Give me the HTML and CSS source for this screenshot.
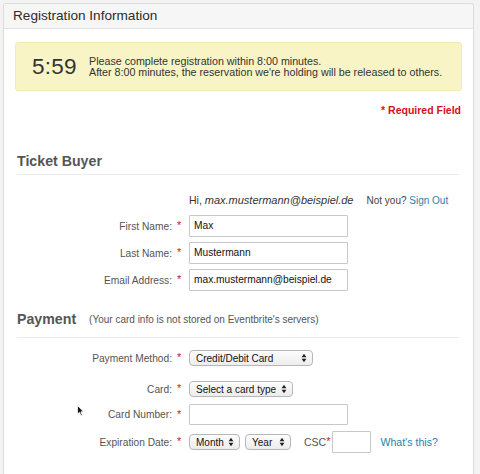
FILE: index.html
```html
<!DOCTYPE html>
<html>
<head>
<meta charset="utf-8">
<link rel="stylesheet" href="styles.css">
</head>
<body>
<div class="panel">
  <div class="panel-head">Registration Information</div>
  <div class="panel-body">
    <div class="timer">
      <div class="clock">5:59</div>
      <div class="timer-text">Please complete registration within 8:00 minutes.<br>After 8:00 minutes, the reservation we're holding will be released to others.</div>
    </div>
    <div class="required">* Required Field</div>

    <h2 class="section buyer">Ticket Buyer</h2>
    <div class="hi-row"><span class="hi">Hi, <em>max.mustermann@beispiel.de</em></span><span class="notyou">Not you? <a class="link">Sign Out</a></span></div>
    <div class="row r-first"><label class="lbl">First Name:</label><span class="star">*</span><span class="input">Max</span></div>
    <div class="row r-in"><label class="lbl">Last Name:</label><span class="star">*</span><span class="input">Mustermann</span></div>
    <div class="row r-in"><label class="lbl">Email Address:</label><span class="star">*</span><span class="input">max.mustermann@beispiel.de</span></div>

    <h2 class="section pay">Payment <small>(Your card info is not stored on Eventbrite's servers)</small></h2>
    <div class="row r-method"><label class="lbl">Payment Method:</label><span class="star">*</span><span class="select w-method">Credit/Debit Card<svg class="arr" viewBox="0 0 6 10" width="6" height="10"><path d="M3 0.8 L5.4 4.2 H0.6 Z M3 9.2 L5.4 5.8 H0.6 Z" fill="#222"/></svg></span></div>
    <div class="row r-card"><label class="lbl">Card:</label><span class="star">*</span><span class="select w-card">Select a card type<svg class="arr" viewBox="0 0 6 10" width="6" height="10"><path d="M3 0.8 L5.4 4.2 H0.6 Z M3 9.2 L5.4 5.8 H0.6 Z" fill="#222"/></svg></span></div>
    <div class="row r-num"><label class="lbl">Card Number:</label><span class="star">*</span><span class="input num"></span></div>
    <div class="row r-exp"><label class="lbl">Expiration Date:</label><span class="star">*</span>
      <span class="select w-month">Month<svg class="arr" viewBox="0 0 6 10" width="6" height="10"><path d="M3 0.8 L5.4 4.2 H0.6 Z M3 9.2 L5.4 5.8 H0.6 Z" fill="#222"/></svg></span>
      <span class="select w-year">Year<svg class="arr" viewBox="0 0 6 10" width="6" height="10"><path d="M3 0.8 L5.4 4.2 H0.6 Z M3 9.2 L5.4 5.8 H0.6 Z" fill="#222"/></svg></span>
      <span class="csc">CSC<span class="star s2">*</span></span>
      <span class="input cscbox"></span>
      <a class="link what">What's this?</a>
    </div>
    <svg class="cursor" width="8" height="12" viewBox="0 0 8 12"><path d="M0.5 0.5 L0.5 9 L2.5 7.2 L4 10.8 L5.3 10.2 L3.9 6.8 L6.5 6.8 Z" fill="#111" stroke="#fff" stroke-width="0.8"/></svg>
  </div>
</div>
</body>
</html>
```
FILE: styles.css
```css
html, body { margin: 0; padding: 0; }
body {
  background: #f3f3f3;
  font-family: "Liberation Sans", Arial, Helvetica, sans-serif;
  color: #333;
  width: 480px;
  height: 474px;
  overflow: hidden;
}
.panel {
  margin: 3px 6px 0 3px;
  background: #fff;
  border: 1px solid #dcdcdc;
  border-bottom: none;
  border-radius: 3px 3px 0 0;
  height: 471px;
  box-sizing: border-box;
  position: relative;
}
.panel-head {
  height: 24px;
  line-height: 24px;
  background: #f6f6f6;
  border-bottom: 1px solid #e2e2e2;
  padding-left: 9px;
  font-size: 13.6px;
  color: #2b2b2b;
  border-radius: 3px 3px 0 0;
}
.panel-body {
  padding: 13px 11px 0 11px;
}
.timer {
  display: flex;
  align-items: center;
  height: 49px;
  background: #f8f4c6;
  border: 1px solid #f1ecb4;
  box-sizing: border-box;
  border-radius: 3px;
  padding-left: 16px;
}
.clock {
  font-size: 22.5px;
  color: #333;
  width: 57px;
  letter-spacing: 0.2px;
}
.timer-text {
  font-size: 10.7px;
  line-height: 10.5px;
  color: #333;
}
.required {
  text-align: right;
  color: #d2111b;
  font-weight: bold;
  font-size: 10.5px;
  line-height: 13px;
  margin-top: 13px;
  padding-right: 1px;
}
.section {
  margin: 36px 0 0 2px;
  font-size: 14.2px;
  line-height: 17px;
  font-weight: bold;
  color: #555;
  padding-bottom: 5px;
  border-bottom: 1px solid #ebebeb;
  width: 442px;
}
.buyer { padding-bottom: 4px; }
.section small {
  font-size: 10px;
  font-weight: normal;
  color: #555;
  margin-left: 9px;
  position: relative;
  top: -1px;
}
.hi-row {
  display: flex;
  align-items: baseline;
  margin-top: 18px;
  margin-left: 174px;
  font-size: 10.5px;
  line-height: 14px;
  color: #333;
  height: 14px;
}
.hi { flex: none; }
.hi em { font-size: 11px; }
.notyou { margin-left: 13px; font-size: 10px; color: #444; flex: none; }
.link { color: #2a7fad; text-decoration: none; }
.row {
  display: flex;
  align-items: center;
}
.lbl {
  width: 157px;
  padding-right: 3px;
  text-align: right;
  font-size: 10.2px;
  color: #555;
  flex: none;
}
.star {
  color: #d2111b;
  font-size: 11px;
  width: 14px;
  padding-left: 2px;
  box-sizing: border-box;
  position: relative;
  top: -1px;
  flex: none;
}
.input {
  display: block;
  width: 159px;
  height: 22px;
  box-sizing: border-box;
  border: 1px solid #c8c8c8;
  border-radius: 1px;
  font-size: 10.2px;
  line-height: 20px;
  padding-left: 4px;
  color: #111;
  background: #fff;
  flex: none;
}
.r-first { margin-top: 8px; }
.r-in { margin-top: 5px; }
.pay { margin-top: 20px; padding-bottom: 8px; }
.r-method { margin-top: 12px; }
.r-card { margin-top: 15px; }
.r-num { margin-top: 7px; }
.r-exp { margin-top: 6px; }
.select {
  display: flex;
  align-items: center;
  justify-content: space-between;
  height: 16px;
  box-sizing: border-box;
  border: 1px solid #b7b7b7;
  border-radius: 4px;
  background: linear-gradient(#fdfdfd, #ececec);
  font-size: 10px;
  color: #111;
  padding: 0 5px 0 6px;
  flex: none;
}
.arr { flex: none; }
.w-method { width: 124px; }
.w-card { width: 104px; }
.w-month { width: 51px; }
.w-year { width: 46px; margin-left: 5px; }
.num { height: 21px; }
.csc {
  font-size: 10.5px;
  color: #555;
  margin-left: 13px;
}
.s2 { padding-left: 0; width: auto; top: -1px; }
.cscbox { width: 39px; height: 22px; margin-left: 2px; }
.what { font-size: 10.6px; margin-left: 9px; }
.cursor {
  position: absolute;
  left: 73px;
  top: 401px;
}
```
